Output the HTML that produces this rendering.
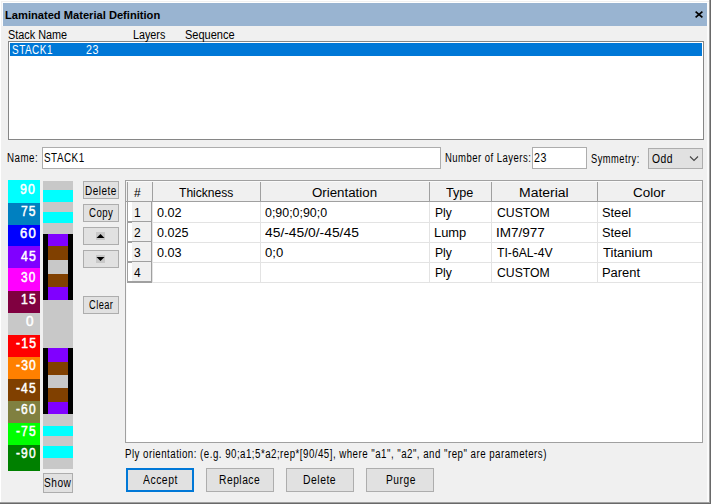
<!DOCTYPE html>
<html><head><meta charset="utf-8">
<style>
*{box-sizing:border-box;margin:0;padding:0}
html,body{width:713px;height:504px;overflow:hidden;background:#fff;font-family:"Liberation Sans",sans-serif;font-size:12px;color:#000}
.a{position:absolute}
.t{position:absolute;white-space:nowrap;line-height:14px;transform-origin:0 0}
.g{position:absolute;white-space:nowrap;line-height:14px;font-size:12px;letter-spacing:0.3px}
.btn{position:absolute;background:#e1e1e1;border:1px solid #adadad}
.box{position:absolute;background:#fff;border:1px solid #adadad}
</style></head><body>
<div class="a" style="left:1px;top:1px;width:710px;height:503px;background:#f0f0f0"></div>
<div class="a" style="left:707px;top:2px;width:2px;height:500px;background:#fafafa"></div>
<div class="a" style="left:2px;top:2px;width:707px;height:1px;background:#fff"></div>
<div class="a" style="left:2px;top:2px;width:1px;height:24px;background:#fafcff"></div>
<div class="a" style="left:709px;top:0;width:1px;height:503px;background:#a0a0a0"></div>
<div class="a" style="left:710px;top:0;width:1px;height:504px;background:#696969"></div>
<div class="a" style="left:0;top:502px;width:710px;height:1px;background:#a0a0a0"></div>
<div class="a" style="left:0;top:503px;width:711px;height:1px;background:#696969"></div>
<div class="a" style="left:3px;top:3px;width:704px;height:23px;background:#99b4d1"></div>
<svg class="a" style="left:694px;top:10px" width="10" height="9" viewBox="0 0 10 9"><path d="M1.6 1.6 L8.4 7.4 M8.4 1.6 L1.6 7.4" stroke="#000" stroke-width="1.7"/></svg>
<div class="a" style="left:8px;top:41px;width:696px;height:99px;background:#fff;border:1px solid #868686"></div>
<div class="a" style="left:10px;top:43px;width:692px;height:13px;background:#0078d7"></div>
<div class="box" style="left:42px;top:147px;width:399px;height:22px"></div>
<div class="box" style="left:532px;top:147px;width:55px;height:22px"></div>
<div class="btn" style="left:648px;top:148px;width:55px;height:21px"></div>
<svg class="a" style="left:689px;top:156px" width="10" height="6" viewBox="0 0 10 6"><path d="M1 0.5 L5 4.5 L9 0.5" stroke="#444" stroke-width="1.1" fill="none"/></svg>
<div class="a" style="left:8px;top:180px;width:32px;height:23px;background:#00ffff"></div>
<div class="a" style="left:8px;top:203px;width:32px;height:22px;background:#0080c0"></div>
<div class="a" style="left:8px;top:225px;width:32px;height:21px;background:#0000ff"></div>
<div class="a" style="left:8px;top:246px;width:32px;height:22px;background:#8000ff"></div>
<div class="a" style="left:8px;top:268px;width:32px;height:23px;background:#ff00ff"></div>
<div class="a" style="left:8px;top:291px;width:32px;height:22px;background:#800040"></div>
<div class="a" style="left:8px;top:313px;width:32px;height:22px;background:#c8c8c8"></div>
<div class="a" style="left:8px;top:335px;width:32px;height:22px;background:#ff0000"></div>
<div class="a" style="left:8px;top:357px;width:32px;height:22px;background:#ff8000"></div>
<div class="a" style="left:8px;top:379px;width:32px;height:22px;background:#804000"></div>
<div class="a" style="left:8px;top:401px;width:32px;height:22px;background:#808040"></div>
<div class="a" style="left:8px;top:423px;width:32px;height:22px;background:#00ff00"></div>
<div class="a" style="left:8px;top:445px;width:32px;height:26px;background:#008000"></div>
<div class="a" style="left:43px;top:181px;width:30px;height:288px;background:#c8c8c8"></div>
<div class="a" style="left:43px;top:190px;width:30px;height:12px;background:#00ffff"></div>
<div class="a" style="left:43px;top:212px;width:30px;height:11px;background:#00ffff"></div>
<div class="a" style="left:43px;top:234px;width:30px;height:66px;background:#000"></div>
<div class="a" style="left:48px;top:234px;width:20px;height:12px;background:#8000ff"></div>
<div class="a" style="left:48px;top:246px;width:20px;height:14px;background:#804000"></div>
<div class="a" style="left:48px;top:260px;width:20px;height:14px;background:#c8c8c8"></div>
<div class="a" style="left:48px;top:274px;width:20px;height:13px;background:#804000"></div>
<div class="a" style="left:48px;top:287px;width:20px;height:13px;background:#8000ff"></div>
<div class="a" style="left:43px;top:348px;width:30px;height:66px;background:#000"></div>
<div class="a" style="left:48px;top:348px;width:20px;height:14px;background:#8000ff"></div>
<div class="a" style="left:48px;top:362px;width:20px;height:13px;background:#804000"></div>
<div class="a" style="left:48px;top:375px;width:20px;height:13px;background:#c8c8c8"></div>
<div class="a" style="left:48px;top:388px;width:20px;height:14px;background:#804000"></div>
<div class="a" style="left:48px;top:402px;width:20px;height:12px;background:#8000ff"></div>
<div class="a" style="left:43px;top:426px;width:30px;height:10px;background:#00ffff"></div>
<div class="a" style="left:43px;top:446px;width:30px;height:12px;background:#00ffff"></div>
<div class="btn" style="left:43px;top:473px;width:30px;height:20px"></div>
<div class="btn" style="left:83px;top:181px;width:36px;height:18px"></div>
<div class="btn" style="left:83px;top:204px;width:36px;height:18px"></div>
<div class="btn" style="left:83px;top:227px;width:36px;height:18px"></div>
<div class="btn" style="left:83px;top:250px;width:36px;height:18px"></div>
<div class="btn" style="left:83px;top:296px;width:36px;height:18px"></div>
<div class="a" style="left:96px;top:232px;width:9px;height:8px;background:#c8c8c8"></div>
<svg class="a" style="left:96px;top:232px" width="9" height="8" viewBox="0 0 9 8"><path d="M0.5 6 L4.5 2 L8.5 6 Z" fill="#000"/></svg>
<div class="a" style="left:96px;top:255px;width:9px;height:8px;background:#c8c8c8"></div>
<svg class="a" style="left:96px;top:255px" width="9" height="8" viewBox="0 0 9 8"><path d="M0.5 2 L4.5 6 L8.5 2 Z" fill="#000"/></svg>
<div class="a" style="left:125px;top:180px;width:578px;height:263px;background:#fff;border:1px solid #a0a0a0"></div>
<div class="a" style="left:126px;top:181px;width:576px;height:21px;background:#f0f0f0;border-bottom:1px solid #a0a0a0"></div>
<div class="a" style="left:126px;top:181px;width:576px;height:1px;background:#fafafa"></div>
<div class="a" style="left:127px;top:182px;width:1px;height:20px;background:#a0a0a0"></div>
<div class="a" style="left:152px;top:182px;width:1px;height:20px;background:#a0a0a0"></div>
<div class="a" style="left:260px;top:182px;width:1px;height:20px;background:#a0a0a0"></div>
<div class="a" style="left:429px;top:182px;width:1px;height:20px;background:#a0a0a0"></div>
<div class="a" style="left:491px;top:182px;width:1px;height:20px;background:#a0a0a0"></div>
<div class="a" style="left:597px;top:182px;width:1px;height:20px;background:#a0a0a0"></div>
<div class="a" style="left:126px;top:202px;width:1px;height:240px;background:#fafafa"></div>
<div class="a" style="left:152px;top:202px;width:1px;height:81px;background:#e3e3e3"></div>
<div class="a" style="left:153px;top:222px;width:549px;height:1px;background:#e3e3e3"></div>
<div class="a" style="left:127px;top:202px;width:25px;height:20px;background:#f0f0f0;border-left:1px solid #a0a0a0;border-right:1px solid #a0a0a0;border-bottom:1px solid #a0a0a0"></div>
<div class="a" style="left:128px;top:202px;width:4px;height:19px;background:#fff"></div>
<div class="a" style="left:153px;top:242px;width:549px;height:1px;background:#e3e3e3"></div>
<div class="a" style="left:127px;top:222px;width:25px;height:20px;background:#f0f0f0;border-left:1px solid #a0a0a0;border-right:1px solid #a0a0a0;border-bottom:1px solid #a0a0a0"></div>
<div class="a" style="left:128px;top:223px;width:4px;height:18px;background:#fff"></div>
<div class="a" style="left:127px;top:222px;width:5px;height:1px;background:#a0a0a0"></div>
<div class="a" style="left:153px;top:262px;width:549px;height:1px;background:#e3e3e3"></div>
<div class="a" style="left:127px;top:242px;width:25px;height:20px;background:#f0f0f0;border-left:1px solid #a0a0a0;border-right:1px solid #a0a0a0;border-bottom:1px solid #a0a0a0"></div>
<div class="a" style="left:128px;top:243px;width:4px;height:18px;background:#fff"></div>
<div class="a" style="left:127px;top:242px;width:5px;height:1px;background:#a0a0a0"></div>
<div class="a" style="left:153px;top:282px;width:549px;height:1px;background:#e3e3e3"></div>
<div class="a" style="left:127px;top:262px;width:25px;height:20px;background:#f0f0f0;border-left:1px solid #a0a0a0;border-right:1px solid #a0a0a0;border-bottom:1px solid #a0a0a0"></div>
<div class="a" style="left:128px;top:263px;width:4px;height:18px;background:#fff"></div>
<div class="a" style="left:127px;top:262px;width:5px;height:1px;background:#a0a0a0"></div>
<div class="a" style="left:127px;top:282px;width:25px;height:1px;background:#a0a0a0"></div>
<div class="a" style="left:260px;top:202px;width:1px;height:81px;background:#e3e3e3"></div>
<div class="a" style="left:429px;top:202px;width:1px;height:81px;background:#e3e3e3"></div>
<div class="a" style="left:491px;top:202px;width:1px;height:81px;background:#e3e3e3"></div>
<div class="a" style="left:597px;top:202px;width:1px;height:81px;background:#e3e3e3"></div>
<div class="btn" style="left:126px;top:468px;width:68px;height:24px;border:2px solid #0078d7"></div>
<div class="btn" style="left:206px;top:468px;width:68px;height:24px"></div>
<div class="btn" style="left:286px;top:468px;width:68px;height:24px"></div>
<div class="btn" style="left:366px;top:468px;width:68px;height:24px"></div>
<div class="g" style="left:134px;top:186px">#</div>
<div class="g" style="left:134px;top:206px">1</div>
<div class="g" style="left:134px;top:226px">2</div>
<div class="g" style="left:134px;top:246px">3</div>
<div class="g" style="left:134px;top:266px">4</div>
<div class="t" id="title" style="left:5.31px;top:8px;font-size:11px;font-weight:bold;color:#000;transform:scaleX(1.0116)">Laminated Material Definition</div>
<div class="t" id="hdr1" style="left:8.00px;top:28px;font-size:12px;font-weight:normal;color:#000;transform:scaleX(0.9049)">Stack Name</div>
<div class="t" id="hdr2" style="left:132.81px;top:28px;font-size:12px;font-weight:normal;color:#000;transform:scaleX(0.8968)">Layers</div>
<div class="t" id="hdr3" style="left:184.64px;top:28px;font-size:12px;font-weight:normal;color:#000;transform:scaleX(0.9176)">Sequence</div>
<div class="t" id="ls1" style="left:12.13px;top:43px;font-size:12px;font-weight:normal;color:#fff;transform:scaleX(0.8299);letter-spacing:0.6px">STACK1</div>
<div class="t" id="ls2" style="left:86.12px;top:43px;font-size:12px;font-weight:normal;color:#fff;transform:scaleX(0.8925);letter-spacing:0.6px">23</div>
<div class="t" id="nm" style="left:6.86px;top:151px;font-size:12px;font-weight:normal;color:#000;transform:scaleX(0.8142);letter-spacing:0.6px">Name:</div>
<div class="t" id="nmv" style="left:44.11px;top:151px;font-size:12px;font-weight:normal;color:#000;transform:scaleX(0.8241);letter-spacing:0.6px">STACK1</div>
<div class="t" id="nol" style="left:445.19px;top:151px;font-size:12px;font-weight:normal;color:#000;transform:scaleX(0.7919);letter-spacing:0.6px">Number of Layers:</div>
<div class="t" id="nolv" style="left:533.74px;top:151px;font-size:12px;font-weight:normal;color:#000;transform:scaleX(0.8877);letter-spacing:0.6px">23</div>
<div class="t" id="sym" style="left:591.13px;top:152px;font-size:12px;font-weight:normal;color:#000;transform:scaleX(0.7761);letter-spacing:0.6px">Symmetry:</div>
<div class="t" id="symv" style="left:651.79px;top:152px;font-size:12px;font-weight:normal;color:#000;transform:scaleX(0.8614);letter-spacing:0.6px">Odd</div>
<div class="t" id="bdel" style="left:85.29px;top:184px;font-size:12px;font-weight:normal;color:#000;transform:scaleX(0.8318);letter-spacing:0.6px">Delete</div>
<div class="t" id="bcopy" style="left:89.13px;top:206px;font-size:12px;font-weight:normal;color:#000;transform:scaleX(0.8030);letter-spacing:0.6px">Copy</div>
<div class="t" id="bclear" style="left:88.81px;top:298px;font-size:12px;font-weight:normal;color:#000;transform:scaleX(0.7703);letter-spacing:0.6px">Clear</div>
<div class="t" id="bshow" style="left:44.16px;top:476px;font-size:12px;font-weight:normal;color:#000;transform:scaleX(0.8470);letter-spacing:0.6px">Show</div>
<div class="t" id="ply" style="left:124.75px;top:447px;font-size:12px;font-weight:normal;color:#000;transform:scaleX(0.8084);letter-spacing:0.6px">Ply orientation: (e.g. 90;a1;5*a2;rep*[90/45], where "a1", "a2", and "rep" are parameters)</div>
<div class="t" id="bacc" style="left:142.71px;top:473px;font-size:12px;font-weight:normal;color:#000;transform:scaleX(0.8654);letter-spacing:0.6px">Accept</div>
<div class="t" id="brep" style="left:219.29px;top:473px;font-size:12px;font-weight:normal;color:#000;transform:scaleX(0.8545);letter-spacing:0.6px">Replace</div>
<div class="t" id="bdel2" style="left:303.33px;top:473px;font-size:12px;font-weight:normal;color:#000;transform:scaleX(0.8659);letter-spacing:0.6px">Delete</div>
<div class="t" id="bpur" style="left:386.05px;top:473px;font-size:12px;font-weight:normal;color:#000;transform:scaleX(0.8518);letter-spacing:0.6px">Purge</div>
<div class="t" id="sw0" style="left:20.49px;top:182px;font-size:14px;font-weight:normal;color:#fff;transform:scaleX(0.8764);-webkit-text-stroke-width:0.5px;letter-spacing:1.3px">90</div>
<div class="t" id="sw1" style="left:21.49px;top:204px;font-size:14px;font-weight:normal;color:#fff;transform:scaleX(0.8588);-webkit-text-stroke-width:0.5px;letter-spacing:1.3px">75</div>
<div class="t" id="sw2" style="left:20.03px;top:226px;font-size:14px;font-weight:normal;color:#fff;transform:scaleX(0.9395);-webkit-text-stroke-width:0.5px;letter-spacing:1.3px">60</div>
<div class="t" id="sw3" style="left:20.61px;top:249px;font-size:14px;font-weight:normal;color:#fff;transform:scaleX(0.8766);-webkit-text-stroke-width:0.5px;letter-spacing:1.3px">45</div>
<div class="t" id="sw4" style="left:20.85px;top:270px;font-size:14px;font-weight:normal;color:#fff;transform:scaleX(0.8458);-webkit-text-stroke-width:0.5px;letter-spacing:1.3px">30</div>
<div class="t" id="sw5" style="left:20.86px;top:292px;font-size:14px;font-weight:normal;color:#fff;transform:scaleX(0.8698);-webkit-text-stroke-width:0.5px;letter-spacing:1.3px">15</div>
<div class="t" id="sw6" style="left:26.28px;top:314px;font-size:14px;font-weight:normal;color:#fff;transform:scaleX(0.9641);-webkit-text-stroke-width:0.5px;letter-spacing:1.3px">0</div>
<div class="t" id="sw7" style="left:15.90px;top:336px;font-size:14px;font-weight:normal;color:#fff;transform:scaleX(0.8723);-webkit-text-stroke-width:0.5px;letter-spacing:1.3px">-15</div>
<div class="t" id="sw8" style="left:16.17px;top:358px;font-size:14px;font-weight:normal;color:#fff;transform:scaleX(0.8677);-webkit-text-stroke-width:0.5px;letter-spacing:1.3px">-30</div>
<div class="t" id="sw9" style="left:15.82px;top:381px;font-size:14px;font-weight:normal;color:#fff;transform:scaleX(0.8593);-webkit-text-stroke-width:0.5px;letter-spacing:1.3px">-45</div>
<div class="t" id="sw10" style="left:15.82px;top:402px;font-size:14px;font-weight:normal;color:#fff;transform:scaleX(0.8587);-webkit-text-stroke-width:0.5px;letter-spacing:1.3px">-60</div>
<div class="t" id="sw11" style="left:15.82px;top:424px;font-size:14px;font-weight:normal;color:#fff;transform:scaleX(0.8593);-webkit-text-stroke-width:0.5px;letter-spacing:1.3px">-75</div>
<div class="t" id="sw12" style="left:15.82px;top:446px;font-size:14px;font-weight:normal;color:#fff;transform:scaleX(0.8587);-webkit-text-stroke-width:0.5px;letter-spacing:1.3px">-90</div>
<div class="t" id="gd0_1" style="left:157.17px;top:206px;font-size:12px;font-weight:normal;color:#000;transform:scaleX(1.0543)">0.02</div>
<div class="t" id="gd1_1" style="left:157.17px;top:226px;font-size:12px;font-weight:normal;color:#000;transform:scaleX(1.0462)">0.025</div>
<div class="t" id="gd2_1" style="left:157.18px;top:246px;font-size:12px;font-weight:normal;color:#000;transform:scaleX(1.0529)">0.03</div>
<div class="t" id="gd0_2" style="left:264.83px;top:206px;font-size:12px;font-weight:normal;color:#000;transform:scaleX(1.0337)">0;90;0;90;0</div>
<div class="t" id="gd1_2" style="left:265.17px;top:226px;font-size:12px;font-weight:normal;color:#000;transform:scaleX(1.1529)">45/-45/0/-45/45</div>
<div class="t" id="gd2_2" style="left:265.45px;top:246px;font-size:12px;font-weight:normal;color:#000;transform:scaleX(1.0908)">0;0</div>
<div class="t" id="gd0_3" style="left:434.50px;top:206px;font-size:12px;font-weight:normal;color:#000;transform:scaleX(1.0038)">Ply</div>
<div class="t" id="gd1_3" style="left:434.32px;top:226px;font-size:12px;font-weight:normal;color:#000;transform:scaleX(1.0749)">Lump</div>
<div class="t" id="gd2_3" style="left:434.56px;top:246px;font-size:12px;font-weight:normal;color:#000;transform:scaleX(1.0139)">Ply</div>
<div class="t" id="gd3_3" style="left:434.56px;top:266px;font-size:12px;font-weight:normal;color:#000;transform:scaleX(1.0139)">Ply</div>
<div class="t" id="gd0_4" style="left:497.26px;top:206px;font-size:12px;font-weight:normal;color:#000;transform:scaleX(1.0184)">CUSTOM</div>
<div class="t" id="gd1_4" style="left:496.47px;top:226px;font-size:12px;font-weight:normal;color:#000;transform:scaleX(1.1247)">IM7/977</div>
<div class="t" id="gd2_4" style="left:497.45px;top:246px;font-size:12px;font-weight:normal;color:#000;transform:scaleX(1.0158)">TI-6AL-4V</div>
<div class="t" id="gd3_4" style="left:497.26px;top:266px;font-size:12px;font-weight:normal;color:#000;transform:scaleX(1.0184)">CUSTOM</div>
<div class="t" id="gd0_5" style="left:602.33px;top:206px;font-size:12px;font-weight:normal;color:#000;transform:scaleX(1.0674)">Steel</div>
<div class="t" id="gd1_5" style="left:602.33px;top:226px;font-size:12px;font-weight:normal;color:#000;transform:scaleX(1.0674)">Steel</div>
<div class="t" id="gd2_5" style="left:602.86px;top:246px;font-size:12px;font-weight:normal;color:#000;transform:scaleX(1.0865)">Titanium</div>
<div class="t" id="gd3_5" style="left:601.76px;top:266px;font-size:12px;font-weight:normal;color:#000;transform:scaleX(1.0765)">Parent</div>
<div class="t" id="h1" style="left:179.03px;top:186px;font-size:12px;font-weight:normal;color:#000;transform:scaleX(1.0065)">Thickness</div>
<div class="t" id="h2" style="left:311.95px;top:186px;font-size:12px;font-weight:normal;color:#000;transform:scaleX(1.1082)">Orientation</div>
<div class="t" id="h3" style="left:446.08px;top:186px;font-size:12px;font-weight:normal;color:#000;transform:scaleX(1.0533)">Type</div>
<div class="t" id="h4" style="left:518.83px;top:186px;font-size:12px;font-weight:normal;color:#000;transform:scaleX(1.1631)">Material</div>
<div class="t" id="h5" style="left:632.64px;top:186px;font-size:12px;font-weight:normal;color:#000;transform:scaleX(1.1219)">Color</div>
</body></html>
